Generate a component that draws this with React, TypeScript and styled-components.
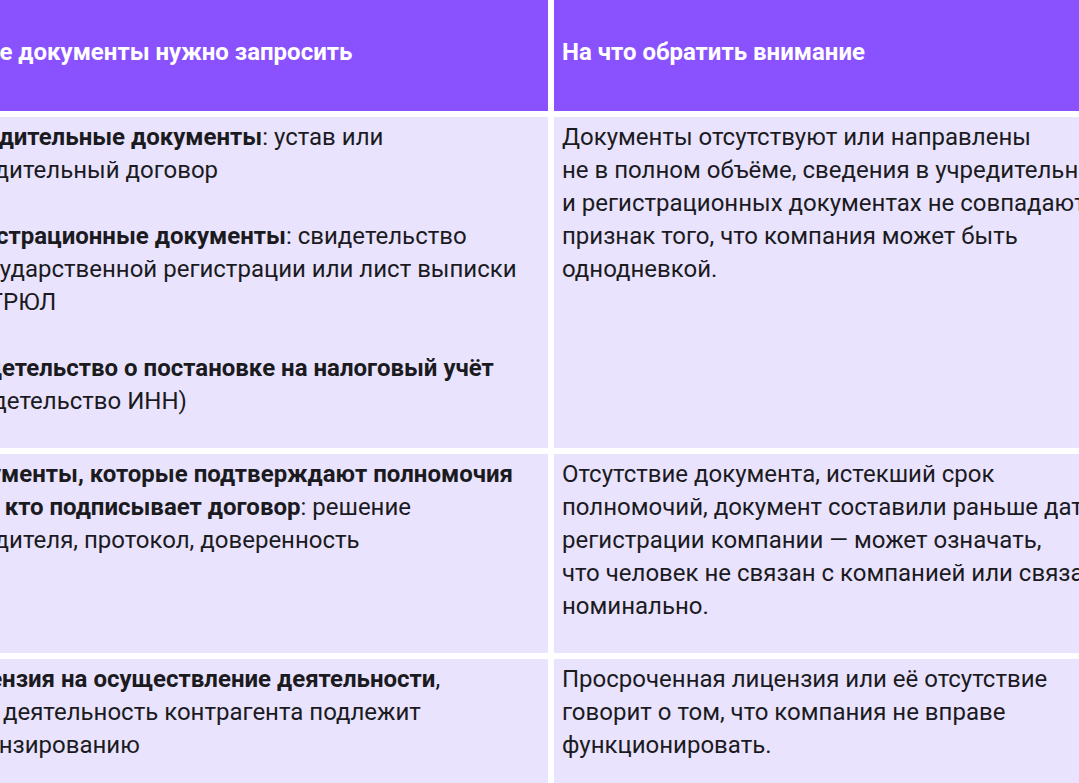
import React from 'react';
import styled, { createGlobalStyle } from 'styled-components';

const GlobalStyle = createGlobalStyle`
  html, body {
    margin: 0;
    padding: 0;
    background: #ffffff;
  }
  body {
    font-family: Roboto, "Noto Sans", "Liberation Sans", sans-serif;
    color: #1b1b1f;
    overflow: hidden;
  }
`;

const Viewport = styled.div`
  width: 1079px;
  height: 783px;
  overflow: hidden;
`;

// the table is wider than the window, its left edge sits off-screen
const Table = styled.div`
  display: grid;
  grid-template-columns: 612px 566px;
  column-gap: 6px;
  row-gap: 6px;
  margin-left: -64px;
`;

const HeadCell = styled.div`
  height: 111px;
  box-sizing: border-box;
  display: flex;
  align-items: center;
  padding: 0 8px 7px;
  background: #8a52ff;
  color: #ffffff;
  font-size: 24px;
  font-weight: 700;
  line-height: 30px;
`;

const Cell = styled.div`
  box-sizing: border-box;
  padding: 4px 8px 30px;
  background: #e9e3fd;
  font-size: 24px;
  line-height: 33px;

  p {
    margin: 0;
  }
  p + p {
    margin-top: 33px;
  }
  b {
    font-weight: 700;
  }
`;

const nb = '\u00a0';

type Row = {
  docs: React.ReactNode[];
  note: string;
};

const rows: Row[] = [
  {
    docs: [
      <>
        <b>Учредительные документы</b>: устав или учредительный договор
      </>,
      <>
        <b>Регистрационные документы</b>: свидетельство о{nb}государственной регистрации или лист выписки из{nb}ЕГРЮЛ
      </>,
      <>
        <b>Свидетельство о{nb}постановке на{nb}налоговый учёт</b> (свидетельство ИНН)
      </>,
    ],
    note: `Документы отсутствуют или направлены не${nb}в${nb}полном объёме, сведения в учредительных и${nb}регистрационных документах не${nb}совпадают${nb}— признак того, что${nb}компания может быть однодневкой.`,
  },
  {
    docs: [
      <>
        <b>Документы, которые подтверждают полномочия того, кто подписывает договор</b>: решение учредителя, протокол, доверенность
      </>,
    ],
    note: `Отсутствие документа, истекший срок полномочий,${nb}документ составили раньше даты регистрации компании${nb}— может означать, что${nb}человек не${nb}связан с${nb}компанией или связан номинально.`,
  },
  {
    docs: [
      <>
        <b>Лицензия на{nb}осуществление деятельности</b>, если{nb}деятельность контрагента подлежит лицензированию
      </>,
    ],
    note: `Просроченная лицензия или её отсутствие говорит о${nb}том, что${nb}компания не${nb}вправе функционировать.`,
  },
];

export default function App() {
  return (
    <Viewport>
      <GlobalStyle />
      <Table>
        <HeadCell>Какие документы нужно запросить</HeadCell>
        <HeadCell>На что обратить внимание</HeadCell>
        {rows.map((row, i) => (
          <React.Fragment key={i}>
            <Cell>
              {row.docs.map((d, j) => (
                <p key={j}>{d}</p>
              ))}
            </Cell>
            <Cell>
              <p>{row.note}</p>
            </Cell>
          </React.Fragment>
        ))}
      </Table>
    </Viewport>
  );
}
